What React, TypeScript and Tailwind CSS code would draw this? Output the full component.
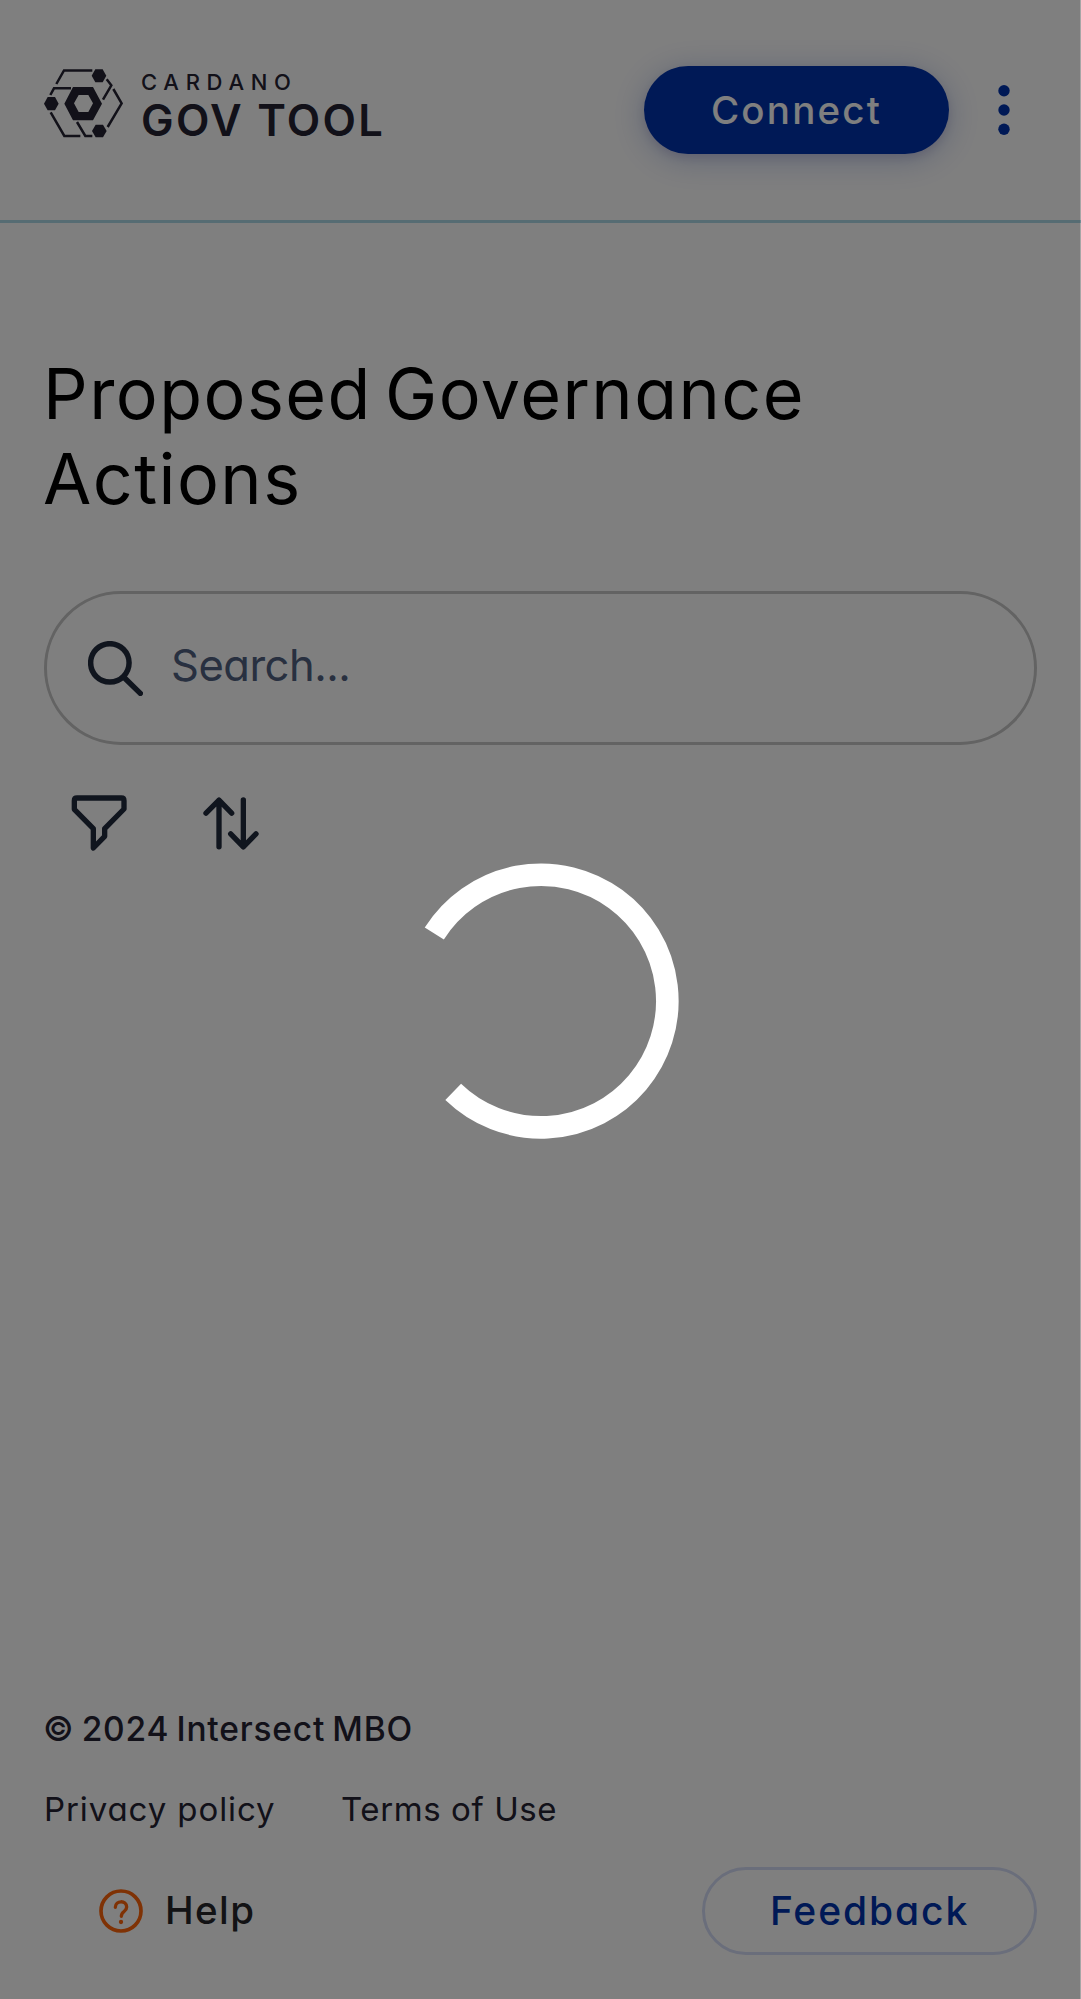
import React from 'react';

function Logo() {
  return (
    <div className="flex items-start gap-[18px] text-[#242232]">
      <svg className="mt-[3px] h-[69px] w-[79px]" viewBox="27 26 237 207" fill="none">
        <g fill="currentColor">
          <path
            fillRule="evenodd"
            d="M88 130 114 80H174L201 130 174 180H114ZM117 129 131 155H160L174 129 160 104H131Z"
          />
          <path d="M170 46 181 27H203L214 46 203 66H181Z" />
          <path d="M27 130 38 110H60L71 130 60 150H38Z" />
          <path d="M171 212 182 193H204L215 212 204 231H182Z" />
        </g>
        <g stroke="currentColor" strokeWidth="7.5">
          <path d="M64 71 87 30.500H172" />
          <path d="M46 104 57 84H108" />
          <path d="M215 57 229 75 204 118" />
          <path d="M235 86 260 129 218 200" />
          <path d="M47 156 88 227H136" />
          <path d="M126 185 151 227H172" />
        </g>
      </svg>
      <div className="mt-[4px] flex flex-col gap-[4px]">
        <span className="text-[22px] font-medium leading-6 tracking-[6.700px]">CARDANO</span>
        <span className="text-[43.500px] font-semibold leading-[44px] tracking-[2.300px]">GOV TOOL</span>
      </div>
    </div>
  );
}

function Header() {
  return (
    <header className="flex h-[223px] shrink-0 items-start justify-between border-b-[3px] border-[#add8e6] pl-[44px] pr-[71px] pt-[66px]">
      <Logo />
      <div className="flex items-center gap-[49px]">
        <button className="h-[88px] w-[305px] rounded-full bg-[#0033ad] pt-[1px] text-[38.500px] font-medium tracking-[2.200px] text-white shadow-[0_5px_34px_rgba(0,51,173,0.26),0_4px_10px_rgba(60,0,110,0.12)]">
          Connect
        </button>
        <svg className="h-[50px] w-[12px] text-[#0033ad]" viewBox="0 0 12 50" fill="currentColor">
          <circle cx="6" cy="5.700" r="5.700" />
          <circle cx="6" cy="25" r="5.700" />
          <circle cx="6" cy="44.300" r="5.700" />
        </svg>
      </div>
    </header>
  );
}

function SearchBar() {
  return (
    <div className="mt-[70px] flex h-[154px] items-center rounded-full border-[3px] border-[#c6c6c6] pl-[41px] text-[#212a3d]">
      <svg className="size-[55px]" viewBox="174 182 166 166" fill="none" stroke="currentColor" strokeWidth="16.500" strokeLinecap="round">
        <circle cx="240" cy="248" r="58" />
        <path d="M283 292 332 340" />
      </svg>
      <span className="mb-[4px] ml-[28px] text-[43.500px] tracking-[-0.500px] text-[#506080]">Search...</span>
    </div>
  );
}

function ListControls() {
  return (
    <div className="mt-[50px] flex items-center gap-[76px] pl-[27px] text-[#212a3d]">
      <svg className="size-[56px]" viewBox="33 28 168 168" fill="none" stroke="currentColor" strokeWidth="16" strokeLinejoin="round">
        <path d="M43 45Q43 37 51 37H184Q192 37 192 45V70L134 129V152L100 187V129L43 71Z" />
      </svg>
      <svg
        className="h-[53px] w-[56px]"
        viewBox="518 651 168 158"
        fill="none"
        stroke="currentColor"
        strokeWidth="16"
        strokeLinecap="round"
        strokeLinejoin="round"
      >
        <path d="M566 800V660M527 699 566 660 604 699" />
        <path d="M639 659V800M601 761 639 800 677 761" />
      </svg>
    </div>
  );
}

function Footer() {
  return (
    <footer className="px-[44px] pb-[44px] text-[#242232]">
      <p className="ml-[-1px] text-[33.500px] font-medium leading-[50px] tracking-[0.800px] [word-spacing:-2.500px]">
        © 2024 Intersect MBO
      </p>
      <div className="mt-[30px] flex text-[33px] leading-[50px]">
        <a className="w-[297px] tracking-[0.900px]">Privacy policy</a>
        <a className="tracking-[0.600px]">Terms of Use</a>
      </div>
      <div className="mt-[33px] flex items-center justify-between">
        <div className="flex items-center gap-[22px] pl-[55px]">
          <svg className="size-[44px] text-[#ff640a]" viewBox="12 12 132 132" fill="none">
            <circle cx="78" cy="78" r="60" stroke="currentColor" strokeWidth="11" />
            <path
              d="M61 67C61 45 95 45 95 66C95 81 79 78 79 94"
              stroke="currentColor"
              strokeWidth="10"
              strokeLinecap="round"
            />
            <circle cx="78" cy="111" r="6.500" fill="currentColor" />
          </svg>
          <span className="text-[38.500px] font-medium tracking-[1.400px] text-[#26262a]">Help</span>
        </div>
        <button className="h-[88px] w-[335px] rounded-full border-[3px] border-[#d5dcf6] text-[39px] font-medium tracking-[1.900px] text-[#0033ad]">
          Feedback
        </button>
      </div>
    </footer>
  );
}

function LoadingOverlay() {
  return (
    <div className="absolute inset-0 flex items-center justify-center border-r border-black/35 bg-black/50 bg-clip-padding">
      <svg className="ml-[2px] mt-[3px] size-[276px]" viewBox="0 0 276 276" fill="none">
        <path d="M31.300 70.500A126.300 126.300 0 1 1 50.200 228.800" stroke="#fff" strokeWidth="22.600" />
      </svg>
    </div>
  );
}

export default function App() {
  return (
    <div className="relative flex h-[1999px] w-[1081px] flex-col overflow-hidden bg-white font-['Inter',sans-serif] [font-feature-settings:'cv11']">
      <Header />
      <main className="flex-1 px-[44px] pt-[128px]">
        <h1 className="ml-[-1px] w-[900px] text-[70px] leading-[85px] tracking-[1.450px] text-black [word-spacing:-8px]">
          Proposed Governance Actions
        </h1>
        <SearchBar />
        <ListControls />
      </main>
      <Footer />
      <LoadingOverlay />
    </div>
  );
}
